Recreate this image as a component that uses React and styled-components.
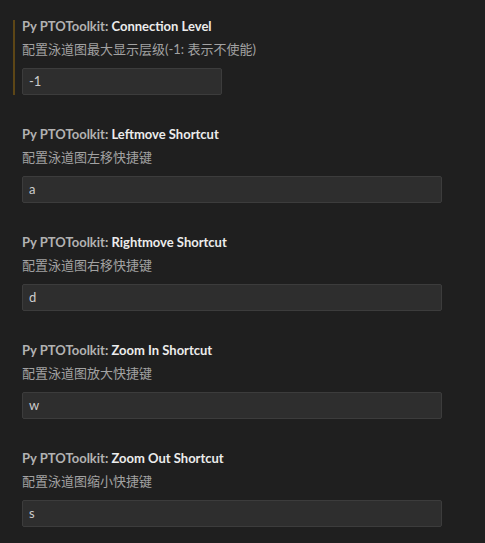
import React from 'react';
import styled, { createGlobalStyle } from 'styled-components';

const GlobalStyle = createGlobalStyle`
  html, body {
    margin: 0;
    padding: 0;
    background: #1f1f1f;
  }
  body {
    font-family: Lato, "Noto Sans CJK SC", sans-serif;
    -webkit-font-smoothing: antialiased;
  }
`;

const Page = styled.div`
  width: 485px;
  height: 543px;
  background: #1f1f1f;
  padding: 17px 0 0 22px;
  box-sizing: border-box;
  overflow: hidden;
`;

const Setting = styled.div`
  position: relative;
  margin-bottom: 30px;

  &::before {
    content: '';
    display: ${(p) => (p.$modified ? 'block' : 'none')};
    position: absolute;
    left: -9px;
    top: 3px;
    bottom: 0;
    width: 2px;
    background: #5d4616;
  }
`;

const Title = styled.div`
  font-size: 13px;
  line-height: 18px;
  font-weight: 700;
  color: #ececec;
  white-space: nowrap;
`;

const Category = styled.span`
  color: #b2b2b2;
`;

const Description = styled.div`
  margin-top: 5px;
  font-size: 13px;
  line-height: 18px;
  color: #a2a2a2;
  white-space: nowrap;
`;

const Input = styled.div`
  margin-top: 10px;
  width: ${(p) => p.$width}px;
  height: 27px;
  box-sizing: border-box;
  background: #2e2e2e;
  border: 1px solid #3c3c3c;
  border-radius: 2px;
  padding: 0 6px;
  font-size: 13px;
  line-height: 25px;
  color: #cccccc;
`;

const settings = [
  { label: 'Connection Level', desc: '配置泳道图最大显示层级(-1: 表示不使能)', value: '-1', width: 200, modified: true },
  { label: 'Leftmove Shortcut', desc: '配置泳道图左移快捷键', value: 'a', width: 420 },
  { label: 'Rightmove Shortcut', desc: '配置泳道图右移快捷键', value: 'd', width: 420 },
  { label: 'Zoom In Shortcut', desc: '配置泳道图放大快捷键', value: 'w', width: 420 },
  { label: 'Zoom Out Shortcut', desc: '配置泳道图缩小快捷键', value: 's', width: 420 },
];

export default function App() {
  return (
    <>
      <GlobalStyle />
      <Page>
        {settings.map((s) => (
          <Setting key={s.label} $modified={s.modified}>
            <Title>
              <Category>Py PTOToolkit: </Category>
              {s.label}
            </Title>
            <Description>{s.desc}</Description>
            <Input $width={s.width}>{s.value}</Input>
          </Setting>
        ))}
      </Page>
    </>
  );
}
